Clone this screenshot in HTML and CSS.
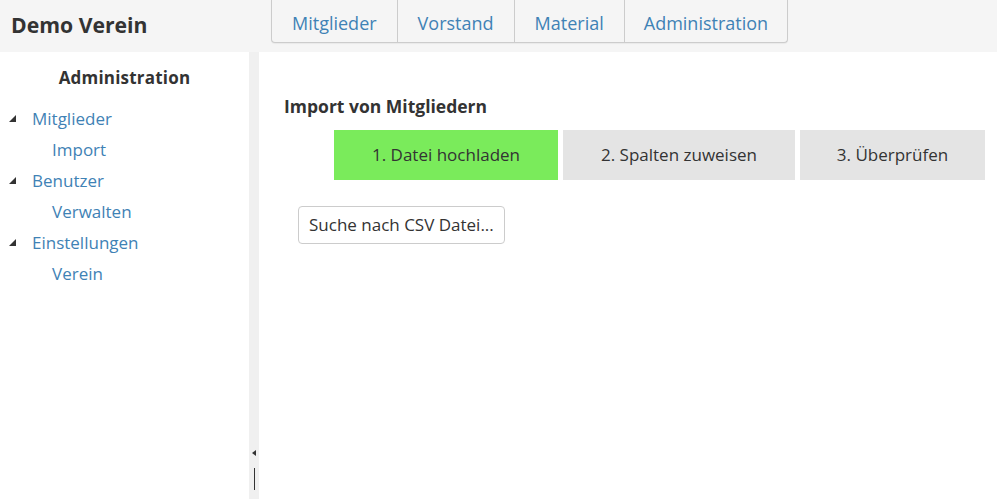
FILE: index.html
```html
<!DOCTYPE html>
<html>

	<head>
		<meta charset="UTF-8">
		<title>Demo Verein</title>
		<link rel="stylesheet" href="styles.css">
	</head>

	<body>
		<div class="header">
			<div class="brand">Demo Verein</div>
			<ul class="topnav">
				<li><a href="javascript:">Mitglieder</a></li>
				<li><a href="javascript:">Vorstand</a></li>
				<li><a href="javascript:">Material</a></li>
				<li><a href="javascript:">Administration</a></li>
			</ul>
		</div>
		<div class="layout">
			<div class="sidebar">
				<div class="side_title">Administration</div>
				<ul class="tree">
					<li class="node"><span class="arrow"></span><a href="javascript:">Mitglieder</a></li>
					<li class="leaf"><a href="javascript:">Import</a></li>
					<li class="node"><span class="arrow"></span><a href="javascript:">Benutzer</a></li>
					<li class="leaf"><a href="javascript:">Verwalten</a></li>
					<li class="node"><span class="arrow"></span><a href="javascript:">Einstellungen</a></li>
					<li class="leaf"><a href="javascript:">Verein</a></li>
				</ul>
			</div>
			<div class="splitter">
				<span class="split_arrow"></span>
				<span class="split_line"></span>
			</div>
			<div class="main">
				<h2 class="page_title">Import von Mitgliedern</h2>
				<div class="steps">
					<div class="step step_active">1. Datei hochladen</div>
					<div class="step step_2">2. Spalten zuweisen</div>
					<div class="step step_3">3. Überprüfen</div>
				</div>
				<a href="javascript:" class="btn">Suche nach CSV Datei...</a>
			</div>
		</div>
	</body>

</html>
```
FILE: styles.css
```css
html,
body {
	margin: 0;
	padding: 0;
	height: 100%;
}

body {
	font-family: "Open Sans", "Noto Sans", sans-serif;
	color: #333;
	background-color: #fff;
	overflow: hidden;
}

a {
	color: #3f82b5;
	text-decoration: none;
}

ul {
	margin: 0;
	padding: 0;
	list-style: none;
}

.header {
	display: flex;
	height: 52px;
	background-color: #f5f5f5;
}

.brand {
	width: 260px;
	padding: 10px 0 0 11px;
	box-sizing: border-box;
	font-size: 21.2px;
	font-weight: bold;
	color: #333;
}

.topnav {
	display: flex;
	align-self: flex-start;
	margin-left: 11px;
	height: 42px;
	border: 1px solid #ccc;
	border-top: none;
	border-radius: 0 0 4px 4px;
	background-color: #f5f5f5;
	box-shadow: 0 1px 1px rgba(0, 0, 0, .05);
}

.topnav li + li {
	border-left: 1px solid #ccc;
}

.topnav a {
	display: block;
	padding: 0 20px;
	line-height: 46px;
	font-size: 18px;
}

.topnav li:last-child a {
	padding: 0 19px;
}

.layout {
	display: flex;
	height: calc(100% - 52px);
}

.sidebar {
	width: 249px;
	flex-shrink: 0;
}

.side_title {
	padding-top: 14px;
	text-align: center;
	font-size: 17px;
	font-weight: bold;
	line-height: 24px;
	letter-spacing: 0.2px;
	color: #333;
}

.tree {
	padding-top: 13px;
}

.tree li {
	height: 31px;
	line-height: 31px;
	font-size: 17px;
}

.tree .node {
	display: flex;
	align-items: center;
	padding-left: 9px;
}

.tree .leaf {
	padding-left: 52px;
}

.arrow {
	width: 0;
	height: 0;
	margin-right: 16px;
	border-left: 7px solid transparent;
	border-bottom: 7px solid #333;
}

.splitter {
	position: relative;
	width: 10px;
	flex-shrink: 0;
	background-color: #f0f0f0;
}

.split_arrow {
	position: absolute;
	left: 3px;
	top: 398px;
	width: 0;
	height: 0;
	border-top: 3px solid transparent;
	border-bottom: 3px solid transparent;
	border-right: 4px solid #333;
}

.split_line {
	position: absolute;
	left: 5px;
	top: 416px;
	width: 1px;
	height: 22px;
	background-color: #333;
}

.main {
	flex: 1;
	padding: 42px 12px 0 25px;
}

.page_title {
	margin: 0;
	font-size: 17.5px;
	font-weight: bold;
	line-height: 24px;
	color: #333;
}

.steps {
	display: flex;
	gap: 5px;
	margin: 12px 0 0 50px;
}

.step {
	height: 50px;
	line-height: 50px;
	text-align: center;
	font-size: 17px;
	color: #333;
	background-color: #e4e4e4;
}

.step_active {
	width: 224px;
	background-color: #7aeb5b;
}

.step_2 {
	width: 232px;
}

.step_3 {
	flex: 1;
}

.btn {
	display: inline-block;
	margin: 26px 0 0 14px;
	padding: 0 10px;
	height: 36px;
	line-height: 36px;
	border: 1px solid #ccc;
	border-radius: 4px;
	font-size: 17px;
	color: #333;
	background-color: #fff;
}
```
